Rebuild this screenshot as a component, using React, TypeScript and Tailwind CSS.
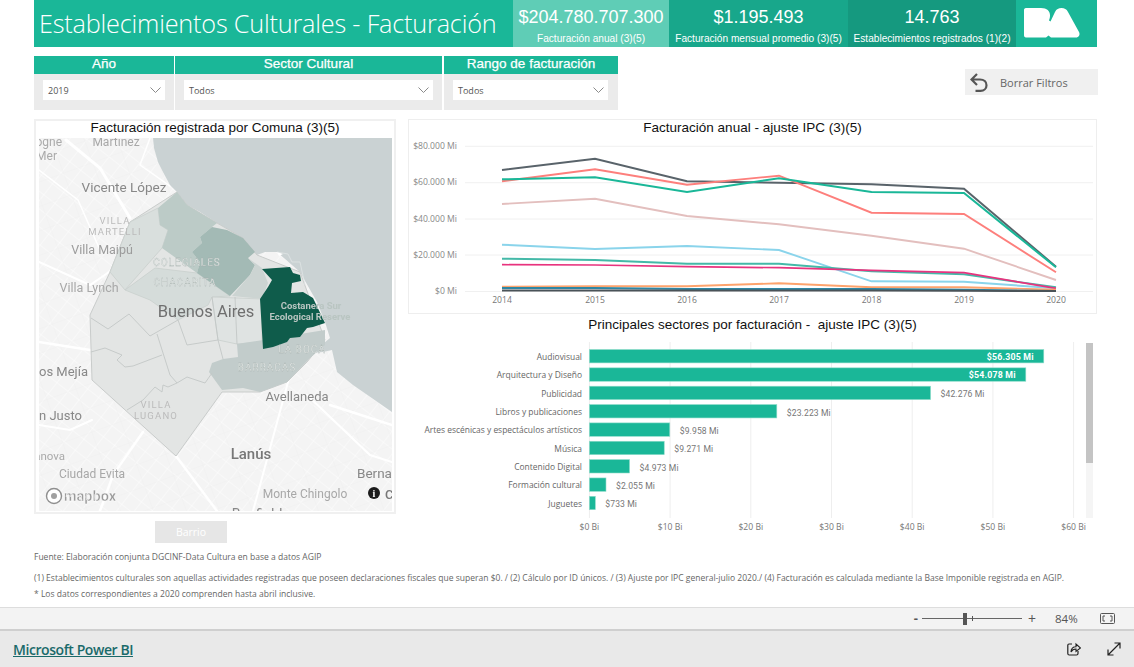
import React from "react";

const SANS = "font-['Liberation_Sans',Arial,sans-serif]";
const OPEN = "font-['Open_Sans',sans-serif]";

function Chevron() {
  return (
    <svg width="11" height="6" viewBox="0 0 11 6" fill="none">
      <path d="M0.5 0.5 L5.5 5.5 L10.5 0.5" stroke="#8a8a8a" strokeWidth="1" />
    </svg>
  );
}

function Slicer({ title, value, w, pl, pr }: { title: string; value: string; w: string; pl: string; pr: string }) {
  return (
    <div className={`${w} h-[54px] flex flex-col`}>
      <div className={`h-[18px] bg-[#1ab798] text-white text-[13.5px] leading-[16px] text-center [-webkit-text-stroke:0.25px_white] ${SANS}`}>{title}</div>
      <div className={`flex-1 bg-[#ebebeb] pt-[6px] ${pl} ${pr}`}>
        <div className="h-[20px] bg-white flex items-center justify-between pl-[5px] pr-[4px]">
          <span className={`text-[9px] text-[#555] pt-[2px] ${OPEN}`}>{value}</span>
          <Chevron />
        </div>
      </div>
    </div>
  );
}

function Kpi({ value, label, w, bg }: { value: string; label: string; w: string; bg: string }) {
  return (
    <div className={`${w} ${bg} h-full flex flex-col items-center text-white ${SANS}`}>
      <div className="text-[18px] leading-[20px] mt-[7px] whitespace-nowrap">{value}</div>
      <div className="text-[10.15px] leading-[12px] mt-[6px] whitespace-nowrap">{label}</div>
    </div>
  );
}

const road = "#ffffff";

function MapView() {
  const lbl = { fontFamily: "Roboto, sans-serif" };
  const cl = { fontFamily: "Roboto, sans-serif", fontSize: 10, letterSpacing: 1, fill: "#f4f6f5", stroke: "#a3aeab", strokeWidth: 0.3, textAnchor: "middle" as const };
  return (
    <svg width="353" height="373" viewBox="39 138 353 373" className="block ml-[3px] blur-[0.35px]">
      <defs>
        <pattern id="streets" width="14" height="14" patternUnits="userSpaceOnUse" patternTransform="rotate(38)">
          <path d="M0 0H14M0 0V14" stroke="#ffffff" strokeWidth="0.8" />
        </pattern>
        <pattern id="streets2" width="31" height="23" patternUnits="userSpaceOnUse" patternTransform="rotate(-20)">
          <path d="M0 0H31M0 0V23" stroke="#ececec" strokeWidth="0.7" />
        </pattern>
      </defs>
      <rect x="39" y="138" width="353" height="373" fill="#f4f4f4" />
      <rect x="39" y="138" width="353" height="373" fill="url(#streets)" />
      <rect x="39" y="138" width="353" height="373" fill="url(#streets2)" />
      {/* highways */}
      <g stroke={road} fill="none" strokeLinecap="round">
        <path d="M66 140 L100 168 L130 218" strokeWidth="3" />
        <path d="M150 138 L140 165 L170 186" strokeWidth="1.5" />
        <path d="M39 170 L78 200 L100 250" strokeWidth="1.5" />
        <path d="M39 262 L90 285 L112 270" strokeWidth="2" />
        <path d="M39 342 L90 350" strokeWidth="2.5" />
        <path d="M39 425 L70 430 L92 420" strokeWidth="2" />
        <path d="M143 432 L113 475 L100 511" strokeWidth="2.5" />
        <path d="M176 456 L217 511" strokeWidth="2.5" />
        <path d="M288 382 L253 511" strokeWidth="2" />
        <path d="M307 395 L370 455 L392 462" strokeWidth="2" />
        <path d="M330 405 L392 425" strokeWidth="2.5" />
      </g>
      {/* water */}
      <polygon
        fill="#cad2d3"
        points="153,138 154,148 158,162 163,172 170,185 177,192 187,205 200,212 217,223 243,238 257,255 265,252 277,252 300,272 317,302 325,322 330,338 312,353 323,352 332,350 337,372 353,385 392,412 392,138"
      />
      {/* city */}
      <polygon
        fill="#e3e5e4"
        stroke="#c9cccb"
        strokeWidth="1"
        points="177,192 130,222 110,272 90,315 92,380 176,456 222,392 260,392 287,382 307,362 325,340 300,272 257,255 243,238 217,223 187,205"
      />
      <polygon fill="#d9dfdd" stroke="#c9cfcd" strokeWidth="0.8" points="130,222 158,208 160,225 168,230 162,248 125,290 110,272" />
      <polygon fill="#d5dcda" stroke="#c9cfcd" strokeWidth="0.8" points="125,290 155,268 197,273 230,296 212,297 208,305 178,320 150,300" />
      <polygon fill="#dfe3e2" stroke="#c9cfcd" strokeWidth="0.8" points="212,297 262,299 262,342 237,344 218,340" />
      <polygon fill="#bccbc7" points="158,208 177,192 187,205 217,223 212,227 200,237 202,243 192,252 200,262 197,273 162,248 168,230 160,225" />
      <polygon fill="#a3bab5" points="212,227 227,230 243,238 255,252 248,258 255,265 250,275 230,296 197,273 200,262 192,252 202,243 200,237" />
      <polygon fill="#ccd4d2" points="248,258 255,265 250,275 232,296 262,299 268,283 262,268" />
      <polygon fill="#c2cccb" points="263,340 325,330 325,345 310,358 287,382 260,392 243,388 222,390 209,372 212,363 223,359 238,357 237,344" />
      <polygon
        fill="#0f5c4b"
        points="262,269 290,267 293,273 300,275 301,281 292,283 291,293 303,292 313,298 325,323 313,327 307,328 300,337 290,338 287,342 273,347 263,349 260,299 268,287 272,280"
      />
      <g fill="none" stroke="#c3c7c6" strokeWidth="0.9">
        <path d="M108 329 L129 314 L150 336 L178 320 L187 345 L218 340 L223 359" />
        <path d="M91 318 L108 329" />
        <path d="M157 334 L163 353 L170 375 L177 383 L187 377 L205 383 L212 373" />
        <path d="M91 352 L105 348 L122 355 L117 360 L125 367 L133 366 L162 355" />
        <path d="M127 410 L143 400 L155 387 L162 392 L163 385 L168 387 L177 383" />
        <path d="M212 297 L218 340 M235 297 L237 344" />
      </g>
      <path d="M277 252 L288 254 L292 262 L300 262 L305 285" fill="none" stroke="#dfe4e4" strokeWidth="0.8" />
      <path d="M277 252 L283 254 L279 256 Z" fill="#ffffff" />

      {/* labels */}
      <g style={lbl}>
        <text x="62" y="146" textAnchor="end" fontSize="12" fill="#aaaaaa">ogne</text>
        <text x="57" y="160" textAnchor="end" fontSize="12" fill="#aaaaaa">Mer</text>
        <text x="116" y="146" textAnchor="middle" fontSize="12" fill="#a8a8a8">Martínez</text>
        <text x="124" y="192" textAnchor="middle" fontSize="13.5" fill="#888888">Vicente López</text>
        <text x="115" y="224" textAnchor="middle" fontSize="9.5" letterSpacing="1.2" fill="#bbbbbb">VILLA</text>
        <text x="115" y="235" textAnchor="middle" fontSize="9.5" letterSpacing="1.2" fill="#bbbbbb">MARTELLI</text>
        <text x="102" y="254" textAnchor="middle" fontSize="12.5" fill="#9c9c9c">Villa Maipú</text>
        <text x="89" y="292" textAnchor="middle" fontSize="12.5" fill="#a8a8a8">Villa Lynch</text>
        <text x="206" y="317" textAnchor="middle" fontSize="16.5" fill="#6f6f6f">Buenos Aires</text>
        <text x="88" y="376" textAnchor="end" fontSize="13" fill="#888888">Ramos Mejía</text>
        <text x="82" y="420" textAnchor="end" fontSize="13" fill="#888888">San Justo</text>
        <text x="65" y="460" textAnchor="end" fontSize="11.5" fill="#aaaaaa">Casanova</text>
        <text x="92" y="478" textAnchor="middle" fontSize="12" fill="#a8a8a8">Ciudad Evita</text>
        <text x="156" y="408" textAnchor="middle" fontSize="9.5" letterSpacing="1.2" fill="#bbbbbb">VILLA</text>
        <text x="156" y="419" textAnchor="middle" fontSize="9.5" letterSpacing="1.2" fill="#bbbbbb">LUGANO</text>
        <text x="297" y="401" textAnchor="middle" fontSize="13" fill="#888888">Avellaneda</text>
        <text x="251" y="459" textAnchor="middle" fontSize="15" fontWeight="500" fill="#777777">Lanús</text>
        <text x="357" y="478" fontSize="13.5" fill="#888888">Bernal</text>
        <text x="305" y="498" textAnchor="middle" fontSize="12" fill="#a8a8a8">Monte Chingolo</text>
        <text x="257" y="519" textAnchor="middle" fontSize="14" fill="#888888">Banfield</text>
        <text x="187" y="266" {...cl}>COLEGIALES</text>
        <text x="185" y="286" {...cl}>CHACARITA</text>
        <text x="302" y="353" {...cl}>LA BOCA</text>
        <text x="267" y="371" {...cl}>BARRACAS</text>
        <text x="311" y="309" textAnchor="middle" fontSize="9.5" fontWeight="700" fill="#b9c5c1">Costanera Sur</text>
        <text x="310" y="320" textAnchor="middle" fontSize="9.5" fontWeight="700" fill="#b9c5c1">Ecological Reserve</text>
      </g>
      {/* mapbox */}
      <circle cx="54" cy="496" r="7.5" fill="#ffffff" stroke="#8f8f8f" strokeWidth="1.4" />
      <circle cx="54" cy="496" r="3" fill="#a0a0a0" />
      <text x="64" y="501" fontFamily="Roboto, sans-serif" fontSize="14.5" fontWeight="700" fill="#9a9a9a" stroke="#ffffff" strokeWidth="0.4">mapbox</text>
      <circle cx="374" cy="493" r="6" fill="#1b1b1b" />
      <text x="374" y="497" textAnchor="middle" fontFamily="'Liberation Serif', serif" fontWeight="700" fontSize="10" fill="#ffffff">i</text>
      <text x="385" y="499" fontFamily="Roboto, sans-serif" fontSize="13" fontWeight="500" fill="#777777">C</text>
    </svg>
  );
}

const X = [502, 595, 687, 779, 871.5, 964, 1056];
const SERIES: [string, number, number[]][] = [
  ["#e3bfbe", 1.9, [204, 198.7, 216, 224.3, 235.7, 248.7, 280]],
  ["#8ad4eb", 1.9, [244.7, 249, 246, 250, 281.3, 281.7, 288.3]],
  ["#44b9a8", 1.9, [258.7, 260, 263.7, 263.7, 271.3, 274.3, 287.3]],
  ["#e8337e", 1.7, [264.7, 265, 266.7, 267.7, 270.3, 272.7, 288.3]],
  ["#fea36c", 1.9, [286.7, 286.3, 286.3, 283.3, 287.3, 287.3, 289.7]],
  ["#2e86a3", 1.9, [288, 288, 289, 289, 289, 289.7, 291]],
  ["#59636a", 2, [170, 158.7, 181.3, 182.7, 184.3, 188.7, 266.7]],
  ["#fd7f7c", 1.9, [181.3, 169.3, 184.7, 175.7, 212.7, 214, 272.3]],
  ["#1ab798", 2, [179.3, 177.3, 192, 178.3, 192, 193, 267.3]],
  ["#4a5358", 2, [290.6, 290.6, 290.6, 290.6, 290.6, 290.8, 291]],
];
const Y_TICKS: [string, number][] = [
  ["$80.000 Mi", 146.3],
  ["$60.000 Mi", 182.7],
  ["$40.000 Mi", 219],
  ["$20.000 Mi", 255],
  ["$0 Mi", 291.5],
];

function LineChart() {
  return (
    <svg width="687" height="176" viewBox="409 137 687 176" className="block">
      {Y_TICKS.map(([t, y]) => (
        <g key={t}>
          <line x1="465" x2="1093" y1={y} y2={y} stroke="#f0f0f0" strokeWidth="1" />
          <text x="457" y={y + 2.5} textAnchor="end" fontFamily="'Open Sans', sans-serif" fontSize="8.6" fill="#888888">{t}</text>
        </g>
      ))}
      {SERIES.map(([c, w, ys], i) => (
        <polyline key={i} points={ys.map((y, k) => `${X[k]},${y}`).join(" ")} fill="none" stroke={c} strokeWidth={w} />
      ))}
      {X.map((x, i) => (
        <text key={x} x={x} y="302.5" textAnchor="middle" fontFamily="'Open Sans', sans-serif" fontSize="8.6" fill="#777777">{2014 + i}</text>
      ))}
    </svg>
  );
}

const BARS: [string, number, string, boolean][] = [
  ["Audiovisual", 56.305, "$56.305 Mi", true],
  ["Arquitectura y Diseño", 54.078, "$54.078 Mi", true],
  ["Publicidad", 42.276, "$42.276 Mi", false],
  ["Libros y publicaciones", 23.223, "$23.223 Mi", false],
  ["Artes escénicas y espectáculos artísticos", 9.958, "$9.958 Mi", false],
  ["Música", 9.271, "$9.271 Mi", false],
  ["Contenido Digital", 4.973, "$4.973 Mi", false],
  ["Formación cultural", 2.055, "$2.055 Mi", false],
  ["Juguetes", 0.733, "$733 Mi", false],
];

function BarChart() {
  const x0 = 589.4;
  const k = 8.07;
  return (
    <svg width="689" height="208" viewBox="408 335 689 208" className="block">
      {[0, 10, 20, 30, 40, 50, 60].map((v) => (
        <g key={v}>
          <line x1={x0 + v * k} x2={x0 + v * k} y1="342" y2="518" stroke="#eeeeee" strokeWidth="1" />
          <text x={x0 + v * k} y="530" textAnchor="middle" fontFamily="'Open Sans', sans-serif" fontSize="8.6" fill="#777777">{`$${v} Bi`}</text>
        </g>
      ))}
      {BARS.map(([name, v, label, inside], i) => {
        const cy = 356 + i * 18.35;
        const end = x0 + v * k;
        return (
          <g key={name}>
            <text x="582" y={cy + 4} textAnchor="end" fontFamily="'Open Sans', sans-serif" fontSize="8.45" fill="#666666">{name}</text>
            <rect x={x0} y={cy - 6.5} width={v * k} height="13.4" fill="#1ab798" stroke="#8fdcca" strokeWidth="0.6" />
            {inside ? (
              <text x={end - 10} y={cy + 4} textAnchor="end" fontFamily="Roboto, sans-serif" fontWeight="700" fontSize="8.8" letterSpacing="0.2" fill="#ffffff">{label}</text>
            ) : (
              <text x={end + 10} y={cy + 4.5} fontFamily="Roboto, sans-serif" fontSize="8.6" letterSpacing="0.1" fill="#777777">{label}</text>
            )}
          </g>
        );
      })}
      <rect x="1086" y="343" width="7" height="175" fill="#f5f5f5" />
      <rect x="1086" y="343" width="7" height="120" fill="#c4c4c4" />
    </svg>
  );
}

export default function App() {
  return (
    <div className="w-[1134px] h-[667px] bg-white flex flex-col overflow-hidden">
      {/* header */}
      <div className="ml-[34px] w-[1063px] h-[47px] shrink-0 flex bg-[#1ab798]">
        <div className={`w-[479px] pl-[5px] text-white text-[25.25px] leading-[47px] font-light whitespace-nowrap tracking-[-0.2px] ${OPEN}`}>
          Establecimientos Culturales - Facturación
        </div>
        <Kpi w="w-[156px]" bg="bg-[#5fcdb6]" value="$204.780.707.300" label="Facturación anual (3)(5)" />
        <Kpi w="w-[179px]" bg="bg-[#18a78b]" value="$1.195.493" label="Facturación mensual promedio (3)(5)" />
        <Kpi w="w-[168px]" bg="bg-[#15997f]" value="14.763" label="Establecimientos registrados (1)(2)" />
        <div className="flex-1 pl-[7px] pt-[6px]">
          <svg width="58" height="34" viewBox="0 0 58 34">
            <path
              d="M3 2 H18 C24 2 27 5 27 9.5 C27 11.5 26.5 13 26 14.5 L27.5 15.5 L32 6 C33.5 3 35.5 2 38.5 2 C41.5 2 43.5 3 45 6 L56 26 C57.5 29 55.5 31.5 53 31.5 H28 L25.5 29.5 L23 31.5 H3 C1.5 31.5 1 30.5 1 29 V4 C1 3 1.5 2 3 2 Z"
              fill="#ffffff"
            />
          </svg>
        </div>
      </div>

      {/* filters */}
      <div className="mt-[9px] ml-[34px] w-[1064px] h-[54px] shrink-0 flex items-start">
        <Slicer title="Año" value="2019" w="w-[140px]" pl="pl-[9px]" pr="pr-[9px]" />
        <div className="w-px" />
        <Slicer title="Sector Cultural" value="Todos" w="w-[267px]" pl="pl-[9px]" pr="pr-[9px]" />
        <div className="w-[2px]" />
        <Slicer title="Rango de facturación" value="Todos" w="w-[174px]" pl="pl-[9px]" pr="pr-[10px]" />
        <div className="ml-auto mt-[13px] w-[133px] h-[26px] bg-[#f0f0f0] flex items-center pl-[5px]">
          <svg width="18" height="20" viewBox="0 0 18 20" fill="none">
            <path d="M7 2 L1.5 7.5 L7 13 M1.5 7.5 H10 C14 7.5 16.5 10 16.5 13.2 C16.5 16.5 14 18.8 10.5 18.8 H5.5" stroke="#555555" strokeWidth="2.2" />
          </svg>
          <span className={`ml-[12px] pt-[3px] text-[11px] text-[#666] ${OPEN}`}>Borrar Filtros</span>
        </div>
      </div>

      {/* main */}
      <div className="mt-[9px] ml-[34px] h-[424px] shrink-0 flex gap-[12px]">
        <div className="w-[362px] flex flex-col">
          <div className="h-[395px] border-2 border-[#f0f0f0]">
            <div className={`h-[17px] text-[13.5px] leading-[14px] text-center text-[#111] ${SANS}`}>Facturación registrada por Comuna (3)(5)</div>
            <MapView />
          </div>
          <div className={`mt-[7px] ml-[121px] w-[72px] h-[22px] bg-[#e6e6e6] text-white text-[10.5px] leading-[22px] text-center ${OPEN}`}>Barrio</div>
        </div>
        <div className="w-[689px] flex flex-col">
          <div className="h-[195px] border border-[#eeeeee]">
            <div className={`h-[17px] text-[13.5px] leading-[15px] text-center text-[#111] ${SANS}`}>Facturación anual - ajuste IPC (3)(5)</div>
            <LineChart />
          </div>
          <div className={`h-[21px] pt-[3px] text-[13.5px] leading-[15px] text-center text-[#111] ${SANS}`}>Principales sectores por facturación -&nbsp; ajuste IPC (3)(5)</div>
          <BarChart />
        </div>
      </div>

      {/* notes */}
      <div className={`h-[64px] shrink-0 pl-[34px] text-[8.53px] text-[#666] whitespace-nowrap ${OPEN}`}>
        <div className="mt-[8px] h-[12px] leading-[12px]">Fuente: Elaboración conjunta DGCINF-Data Cultura en base a datos AGIP</div>
        <div className="mt-[9px] h-[12px] leading-[12px]">(1) Establecimientos culturales son aquellas actividades registradas que poseen declaraciones fiscales que superan $0. / (2) Cálculo por ID únicos. / (3) Ajuste por IPC general-julio 2020./ (4) Facturación es calculada mediante la Base Imponible registrada en AGIP.</div>
        <div className="mt-[4px] h-[12px] leading-[12px]">* Los datos correspondientes a 2020 comprenden hasta abril inclusive.</div>
      </div>

      {/* status bar */}
      <div className="h-[24px] shrink-0 bg-[#f3f3f3] border-t border-[#dddddd] border-b-2 border-b-[#cfcfcf] flex items-center justify-end pr-[19px] text-[#555]">
        <span className={`text-[13px] leading-none font-bold mr-[4px] ${OPEN}`}>-</span>
        <div className="w-[100px] h-px bg-[#666] flex items-center">
          <div className="ml-[41px] w-[4px] h-[12px] bg-[#555] shrink-0" />
          <div className="ml-[5px] w-px h-[5px] bg-[#555] shrink-0" />
        </div>
        <span className={`ml-[6px] text-[14px] leading-none ${OPEN}`}>+</span>
        <span className={`ml-[19px] w-[24px] text-[11.5px] ${OPEN}`}>84%</span>
        <svg className="ml-[21px]" width="15" height="11" viewBox="0 0 15 11" fill="none">
          <rect x="0.5" y="0.5" width="14" height="10" rx="1" stroke="#555555" />
          <path d="M5 3 H3 V8 H5 M10 3 H12 V8 H10" stroke="#555555" />
        </svg>
      </div>

      {/* power bi bar */}
      <div className="flex-1 bg-[#e9e9e9] flex items-center pl-[13px] pr-[13px]">
        <a className={`mt-[1px] text-[#1a6a6a] underline text-[14px] font-semibold tracking-[-0.43px] ${OPEN}`}>Microsoft Power BI</a>
        <svg className="ml-auto mr-[-1px]" width="14" height="14" viewBox="0 0 14 14" fill="none">
          <path d="M5 2 H2 C1.2 2 0.8 2.5 0.8 3.2 V11.5 C0.8 12.4 1.3 13 2.2 13 H9.5 C10.5 13 11 12.4 11 11.5 V9" stroke="#222222" strokeWidth="1.2" />
          <path d="M4 10 C4 6.5 6 4.8 9 4.8 V2 L13.5 6 L9 9.5 V7 C6.8 7 5 8 4 10 Z" stroke="#222222" strokeWidth="1.1" fill="none" />
        </svg>
        <svg className="ml-[27px]" width="14" height="14" viewBox="0 0 14 14" fill="none">
          <path d="M1 13 L13 1 M7.5 1 H13 V6.5 M1 7.5 V13 H6.5" stroke="#222222" strokeWidth="1.2" />
        </svg>
      </div>
    </div>
  );
}
